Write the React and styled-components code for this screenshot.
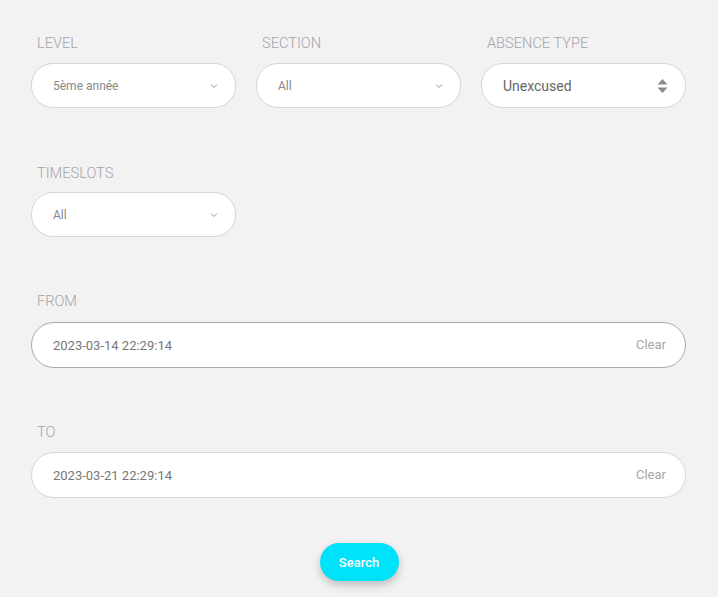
import styled, { createGlobalStyle } from "styled-components";

const Global = createGlobalStyle`
  html, body { margin: 0; background: #f2f2f2; }
  body { font-family: Roboto, "Noto Sans", sans-serif; }
`;

const Page = styled.div`
  padding: 35px 32px 16px 31px;
  display: flex;
  flex-direction: column;
`;

const Row = styled.div`
  display: grid;
  grid-template-columns: repeat(3, 205px);
  column-gap: 20px;
  margin-bottom: ${(p) => p.$gap || 58}px;
`;

const Field = styled.div`
  display: flex;
  flex-direction: column;
  margin-bottom: ${(p) => p.$gap || 0}px;
`;

const Label = styled.label`
  font-size: 14.6px;
  font-weight: 300;
  line-height: 16px;
  color: #a4a4ac;
  padding-left: 6px;
  margin-bottom: ${(p) => p.$mb || 12}px;
`;

const Select = styled.div`
  height: 45px;
  box-sizing: border-box;
  border: 1px solid #d6d6d6;
  border-radius: 22px;
  background: #fff;
  display: flex;
  align-items: center;
  justify-content: space-between;
  padding: 0 17px 0 21px;
  font-size: ${(p) => (p.$big ? 14 : 12)}px;
  color: ${(p) => (p.$big ? "#666" : "#888")};
`;

const DateBox = styled.div`
  height: 46px;
  box-sizing: border-box;
  border: 1px solid ${(p) => (p.$active ? "#a8a8a8" : "#d6d6d6")};
  border-radius: 23px;
  background: #fff;
  display: flex;
  align-items: center;
  justify-content: space-between;
  padding: 0 19px 0 21px;
  font-size: 13px;
  color: #777;
`;

const Clear = styled.span`
  font-size: 13px;
  color: #a6a6a6;
  margin-top: -2px;
`;

const Actions = styled.div`
  display: flex;
  justify-content: center;
`;

const SearchButton = styled.button`
  height: 38px;
  width: 79px;
  margin-left: 1px;
  border: none;
  border-radius: 19px;
  background: #00e1fa;
  color: #fff;
  font-family: Roboto, sans-serif;
  font-size: 13px;
  font-weight: 500;
  box-shadow: 0 4px 8px rgba(0, 0, 0, 0.22);
  cursor: pointer;
`;

const Chevron = () => (
  <svg width="8" height="6" viewBox="0 0 8 6">
    <path d="M1 1.5 L4 4.5 L7 1.5" fill="none" stroke="#999" strokeWidth="1" />
  </svg>
);

const UpDown = () => (
  <svg width="11" height="16" viewBox="0 0 11 16">
    <path d="M5.5 1 L10.5 6.5 L0.5 6.5 Z" fill="#8c8c8c" />
    <path d="M5.5 15 L10.5 9.5 L0.5 9.5 Z" fill="#8c8c8c" />
  </svg>
);

export default function App() {
  return (
    <Page>
      <Global />
      <Row $gap={57}>
        <Field>
          <Label>LEVEL</Label>
          <Select>
            5ème année <Chevron />
          </Select>
        </Field>
        <Field>
          <Label>SECTION</Label>
          <Select>
            All <Chevron />
          </Select>
        </Field>
        <Field>
          <Label>ABSENCE TYPE</Label>
          <Select $big>
            Unexcused <UpDown />
          </Select>
        </Field>
      </Row>
      <Row $gap={56}>
        <Field>
          <Label $mb={11}>TIMESLOTS</Label>
          <Select>
            All <Chevron />
          </Select>
        </Field>
      </Row>
      <Field $gap={56}>
        <Label $mb={13}>FROM</Label>
        <DateBox $active>
          2023-03-14 22:29:14 <Clear>Clear</Clear>
        </DateBox>
      </Field>
      <Field $gap={45}>
        <Label $mb={12}>TO</Label>
        <DateBox>
          2023-03-21 22:29:14 <Clear>Clear</Clear>
        </DateBox>
      </Field>
      <Actions>
        <SearchButton>Search</SearchButton>
      </Actions>
    </Page>
  );
}
